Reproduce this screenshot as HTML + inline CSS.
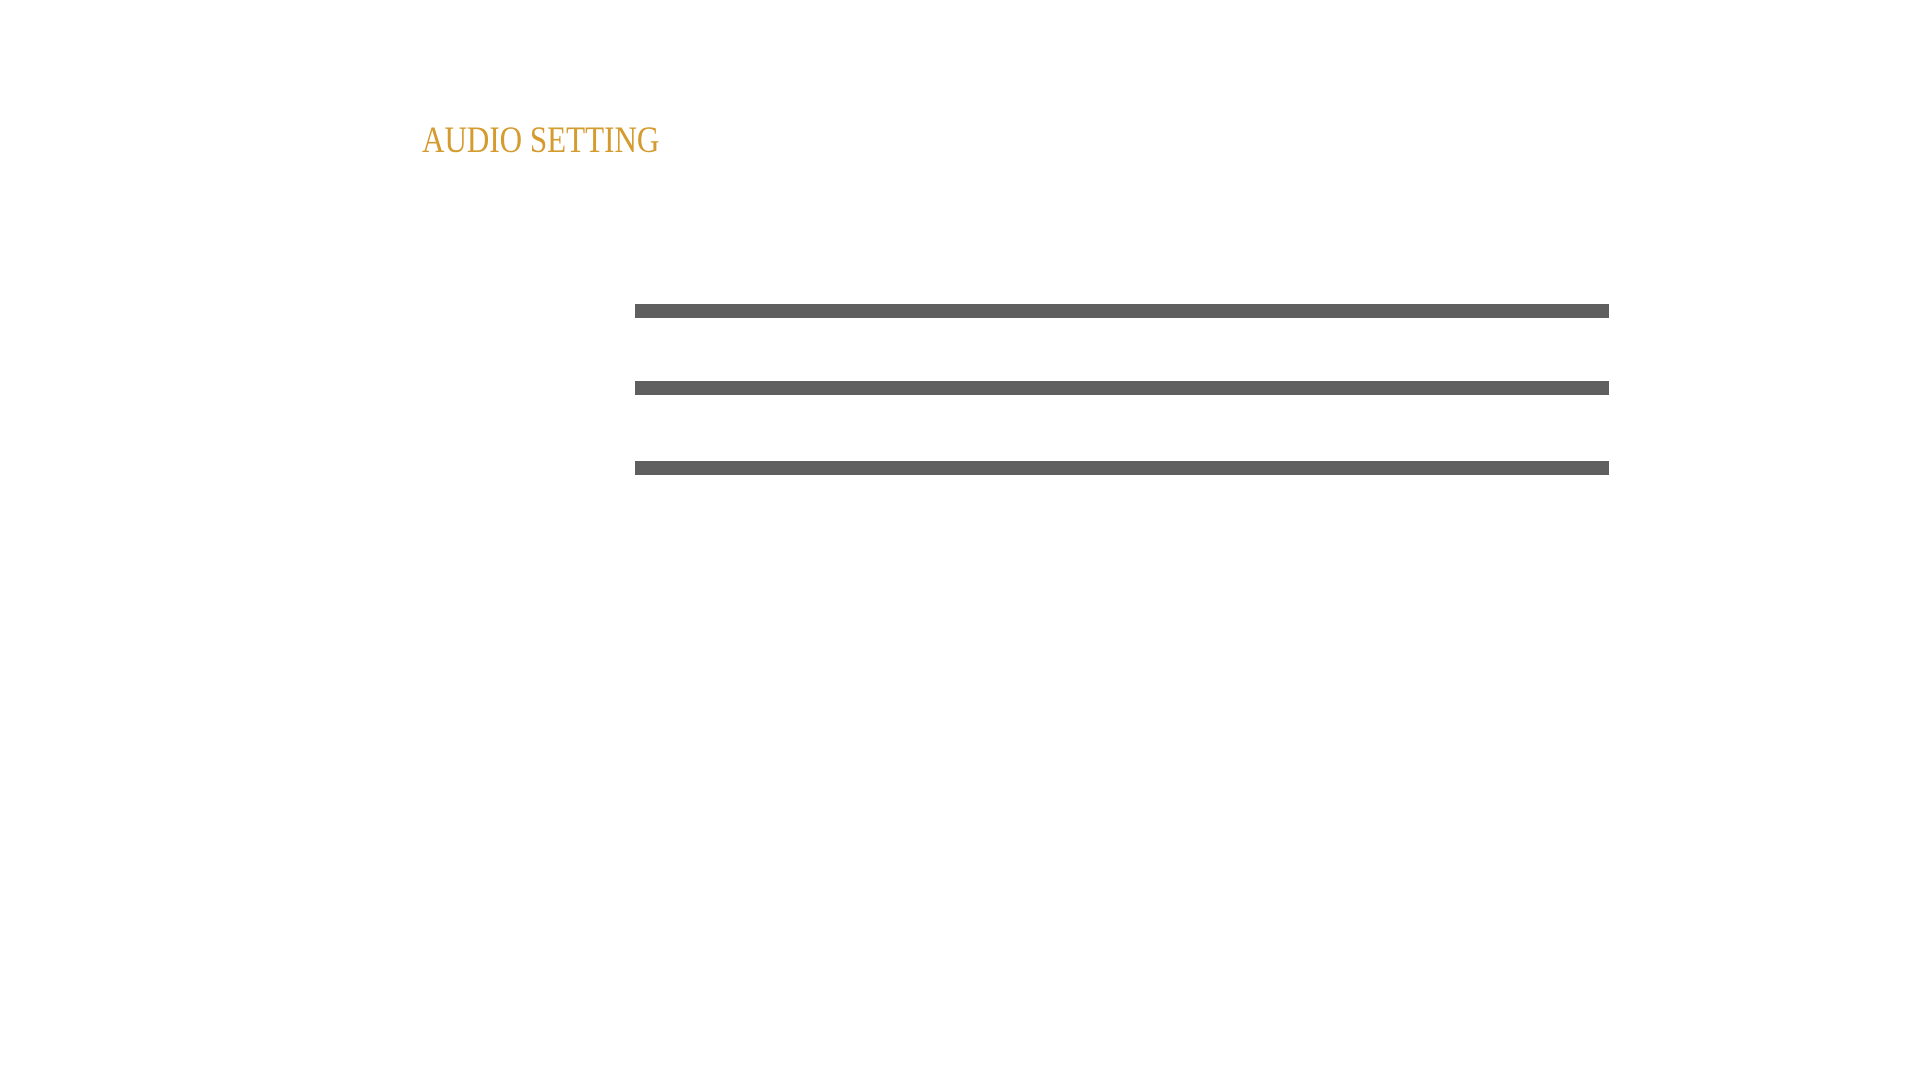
<!DOCTYPE html>
<html><head><meta charset="utf-8"><style>
html,body{margin:0;padding:0;width:1920px;height:1080px;background:#fff;overflow:hidden}
.t{position:absolute;left:422px;top:119px;font-family:"Liberation Serif",serif;font-size:37px;line-height:44px;color:#d49b2e;white-space:nowrap;transform:scaleX(0.84);transform-origin:0 0}
.b{position:absolute;left:635px;width:974px;height:14px;background:#5f5f5f}
</style></head><body>
<div class="t">AUDIO SETTING</div>
<div class="b" style="top:304px"></div>
<div class="b" style="top:381px"></div>
<div class="b" style="top:461px"></div>
</body></html>
